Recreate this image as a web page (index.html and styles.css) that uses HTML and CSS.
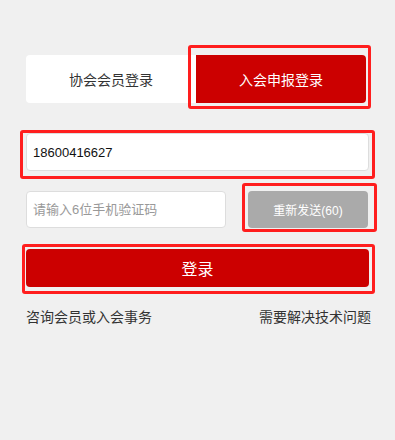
FILE: index.html
```html
<!DOCTYPE html>
<html lang="zh-CN">

<head>
  <meta charset="UTF-8" />
  <meta name="viewport" content="width=device-width, initial-scale=1.0" />
  <title>入会申报登录</title>
  <link rel="stylesheet" href="styles.css">
</head>

<body>
  <div class="login-box">
    <ul class="tabs">
      <li class="tab">协会会员登录</li>
      <li class="tab active mark mark-tab">入会申报登录</li>
    </ul>
    <div class="field mark mark-phone">
      <input type="text" class="input" value="18600416627" />
    </div>
    <div class="code-row">
      <input type="text" class="input code" placeholder="请输入6位手机验证码" />
      <div class="mark mark-send">
        <button class="send" disabled>重新发送(60)</button>
      </div>
    </div>
    <div class="submit-wrap mark mark-login">
      <button class="submit">登录</button>
    </div>
    <div class="links">
      <a href="#">咨询会员或入会事务</a>
      <a href="#">需要解决技术问题</a>
    </div>
  </div>
</body>

</html>
```

FILE: styles.css
```css
* {
  box-sizing: border-box;
}

body {
  margin: 0;
  background: #f0f0f0;
  font-family: "Liberation Sans", "Noto Sans CJK SC", sans-serif;
  color: #333;
}

.login-box {
  width: 395px;
  height: 440px;
  padding: 55px 26px 0 26px;
}

.tabs {
  margin: 0;
  padding: 0;
  list-style: none;
  display: flex;
  width: 340px;
  height: 48px;
  background: #fff;
  border-radius: 4px;
}

.tab {
  flex: 1;
  display: flex;
  align-items: center;
  justify-content: center;
  font-size: 14px;
  color: #333;
  cursor: pointer;
}

.tab.active {
  background: #cc0000;
  color: #fff;
  border-radius: 0 4px 4px 0;
}

.field {
  margin-top: 30px;
}

.input {
  display: block;
  width: 100%;
  height: 38px;
  border: 1px solid #ddd;
  border-radius: 4px;
  background: #fff;
  padding: 0 0 0 6px;
  font-family: inherit;
  font-size: 13px;
  color: #111;
  outline: none;
}

.input::placeholder {
  color: #999;
}

.code-row {
  margin-top: 20px;
  display: flex;
  justify-content: space-between;
}

.input.code {
  width: 200px;
  height: 37px;
}

.send {
  display: block;
  width: 120px;
  height: 37px;
  border: none;
  border-radius: 4px;
  background: #aaa;
  color: #fff;
  font-family: inherit;
  font-size: 12px;
  margin-right: 1px;
}

.submit-wrap {
  margin-top: 21px;
}

.submit {
  display: block;
  width: 100%;
  height: 38px;
  border: none;
  border-radius: 4px;
  background: #cc0000;
  color: #fff;
  font-family: inherit;
  font-size: 16px;
  cursor: pointer;
}

.links {
  margin-top: 20px;
  display: flex;
  justify-content: space-between;
  line-height: 20px;
  font-size: 14px;
  padding-right: 0;
  margin-right: -2px;
}

.links a {
  color: #333;
  text-decoration: none;
}

/* 红框标注 */
.mark {
  position: relative;
}

.mark::after {
  content: "";
  position: absolute;
  border: 3px solid #ff1e1e;
  border-radius: 3px;
  pointer-events: none;
}

.mark-tab::after {
  top: -10px;
  left: -8px;
  right: -5px;
  bottom: -6px;
}

.mark-phone::after {
  top: -3px;
  left: -6px;
  right: -6px;
  bottom: -8px;
}

.mark-send::after {
  top: -8px;
  left: -6px;
  right: -8px;
  bottom: -4px;
}

.mark-login::after {
  top: -5px;
  left: -4px;
  right: -6px;
  bottom: -7px;
}
```
